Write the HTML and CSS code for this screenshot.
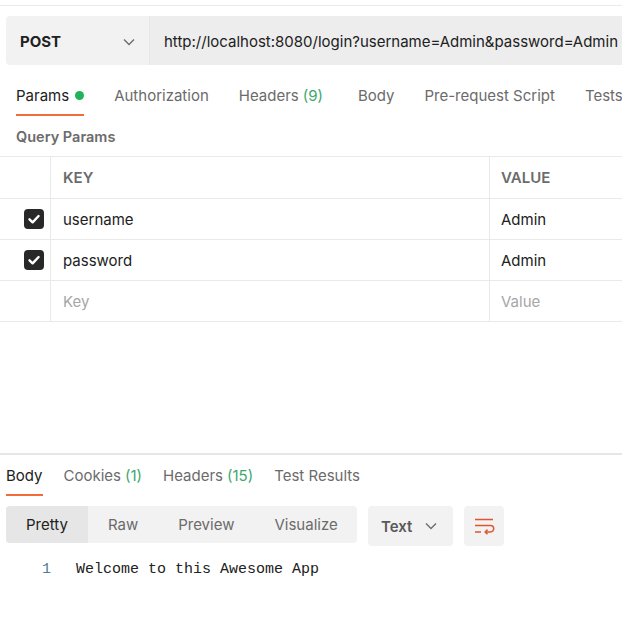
FILE: index.html
```html
<!DOCTYPE html>
<html>
<head>
<meta charset="utf-8">
<link rel="stylesheet" href="styles.css">
</head>
<body>
<div class="page">
  <div class="topline"></div>
  <div class="request">
    <div class="method">
      <span class="method-name">POST</span>
      <svg class="chev" width="12" height="8" viewBox="0 0 12 8"><path d="M1 1.5 L6 6.5 L11 1.5" fill="none" stroke="#6b6b6b" stroke-width="1.3"/></svg>
    </div>
    <div class="url">http://localhost:8080/login?username=Admin&amp;password=Admin</div>
  </div>

  <div class="tabs">
    <div class="tab active">Params <span class="dot"></span></div>
    <div class="tab">Authorization</div>
    <div class="tab">Headers <span class="count">(9)</span></div>
    <div class="tab tab-body">Body</div>
    <div class="tab">Pre-request Script</div>
    <div class="tab">Tests</div>
  </div>

  <div class="section-title">Query Params</div>

  <div class="table">
    <div class="row head">
      <div class="cell check"></div>
      <div class="cell key">KEY</div>
      <div class="cell value">VALUE</div>
    </div>
    <div class="row">
      <div class="cell check"><span class="box"><svg width="20" height="20" viewBox="0 0 20 20"><path d="M5.5 10.3 L8.6 13.3 L14.6 7" fill="none" stroke="#fff" stroke-width="2.4" stroke-linecap="round" stroke-linejoin="round"/></svg></span></div>
      <div class="cell key">username</div>
      <div class="cell value">Admin</div>
    </div>
    <div class="row">
      <div class="cell check"><span class="box"><svg width="20" height="20" viewBox="0 0 20 20"><path d="M5.5 10.3 L8.6 13.3 L14.6 7" fill="none" stroke="#fff" stroke-width="2.4" stroke-linecap="round" stroke-linejoin="round"/></svg></span></div>
      <div class="cell key">password</div>
      <div class="cell value">Admin</div>
    </div>
    <div class="row">
      <div class="cell check"></div>
      <div class="cell key placeholder">Key</div>
      <div class="cell value placeholder">Value</div>
    </div>
  </div>

  <div class="response">
    <div class="rtabs">
      <div class="rtab active">Body</div>
      <div class="rtab">Cookies <span class="count">(1)</span></div>
      <div class="rtab">Headers <span class="count">(15)</span></div>
      <div class="rtab">Test Results</div>
    </div>
    <div class="toolbar">
      <div class="segmented">
        <div class="seg selected">Pretty</div>
        <div class="seg">Raw</div>
        <div class="seg">Preview</div>
        <div class="seg">Visualize</div>
      </div>
      <div class="format">
        <span>Text</span>
        <svg class="chev" width="12" height="8" viewBox="0 0 12 8"><path d="M1 1.5 L6 6.5 L11 1.5" fill="none" stroke="#6b6b6b" stroke-width="1.3"/></svg>
      </div>
      <div class="wrapbtn">
        <svg width="22" height="20" viewBox="0 0 22 20"><path d="M2 3.5 H20 M2 9.5 H17.5 a3.2 3.2 0 0 1 0 6.4 H12.5 M2 15.9 H8" fill="none" stroke="#e0562f" stroke-width="1.5"/><path d="M14.5 13.6 L12.2 15.9 L14.5 18.2" fill="none" stroke="#e0562f" stroke-width="1.5"/></svg>
      </div>
    </div>
    <div class="code">
      <span class="ln">1</span>
      <span class="line">Welcome to this Awesome App</span>
    </div>
  </div>
</div>
</body>
</html>
```

FILE: styles.css
```css
html, body {
  margin: 0;
  padding: 0;
  background: #ffffff;
}
body {
  width: 622px;
  height: 624px;
  overflow: hidden;
  font-family: Inter, "Open Sans", sans-serif;
  font-size: 15px;
  color: #212121;
}
.page {
  width: 622px;
  overflow: hidden;
}
.topline {
  margin-top: 5px;
  height: 1px;
  background: #ebebeb;
}
.request {
  display: flex;
  height: 49px;
  margin: 10px 0 0 6px;
  width: 700px;
}
.method {
  width: 144px;
  box-sizing: border-box;
  background: #f2f2f2;
  border-radius: 4px 0 0 4px;
  display: flex;
  align-items: center;
  justify-content: space-between;
  padding: 2px 14px 0 14px;
  border-right: 1px solid #e6e6e6;
}
.method-name {
  font-weight: 700;
  font-size: 15px;
  color: #212121;
}
.url {
  flex: 1;
  background: #ededed;
  display: flex;
  align-items: center;
  padding: 2px 0 0 14px;
  white-space: nowrap;
  color: #212121;
}
.tabs {
  display: flex;
  gap: 30px;
  padding-left: 16px;
  height: 51px;
  white-space: nowrap;
}
.tab {
  display: flex;
  align-items: center;
  color: #6b6b6b;
  height: 100%;
  box-sizing: border-box;
  padding-top: 12px;
  border-bottom: 2px solid transparent;
}
.tab.active {
  color: #212121;
  border-bottom-color: #f26b3a;
}
.tab-body {
  margin-left: 5px;
}
.dot {
  display: inline-block;
  width: 9px;
  height: 9px;
  border-radius: 50%;
  background: #1fb35a;
  margin-left: 6px;
}
.count {
  color: #3ea870;
  margin-left: 4px;
}
.section-title {
  padding-left: 16px;
  height: 40px;
  display: flex;
  align-items: center;
  font-weight: 600;
  color: #6b6b6b;
  font-size: 14.5px;
}
.table {
  border-top: 1px solid #e9e9e9;
}
.row {
  display: flex;
  height: 40px;
  border-bottom: 1px solid #e9e9e9;
}
.row.head {
  height: 41px;
}
.cell {
  display: flex;
  align-items: center;
  box-sizing: border-box;
}
.check {
  width: 51px;
  border-right: 1px solid #e9e9e9;
  justify-content: flex-end;
  padding-right: 6px;
}
.key {
  width: 439px;
  border-right: 1px solid #e9e9e9;
  padding-left: 12px;
}
.value {
  flex: 1;
  padding-left: 11px;
}
.head .cell {
  font-weight: 600;
  color: #6b6b6b;
}
.placeholder {
  color: #a6a6a6;
}
.box {
  width: 20px;
  height: 20px;
  border-radius: 4px;
  background: #282828;
  display: block;
}
.box svg { display: block; }
.response {
  margin-top: 131px;
  border-top: 2px solid #e6e6e6;
}
.rtabs {
  display: flex;
  gap: 21px;
  padding-left: 6px;
  height: 41px;
  white-space: nowrap;
}
.rtab {
  display: flex;
  align-items: center;
  color: #6b6b6b;
  box-sizing: border-box;
  height: 100%;
  padding-top: 2px;
  border-bottom: 2px solid transparent;
}
.rtab.active {
  color: #212121;
  border-bottom-color: #f26b3a;
}
.toolbar {
  display: flex;
  align-items: flex-start;
  margin-top: 10px;
  padding-left: 6px;
  gap: 11px;
}
.segmented {
  display: flex;
  height: 37px;
  background: #f2f2f2;
  border-radius: 4px;
  width: 351px;
}
.seg {
  display: flex;
  align-items: center;
  color: #6b6b6b;
  padding: 0 20px;
}
.seg.selected {
  background: #e6e6e6;
  color: #212121;
  border-radius: 4px 0 0 4px;
  width: 83px;
  box-sizing: border-box;
}
.format {
  width: 85px;
  height: 40px;
  box-sizing: border-box;
  background: #f2f2f2;
  border-radius: 4px;
  display: flex;
  align-items: center;
  justify-content: space-between;
  padding: 0 16px 0 13px;
  font-weight: 600;
  color: #5a5a5a;
}
.wrapbtn {
  width: 40px;
  height: 40px;
  background: #f2f2f2;
  border-radius: 4px;
  display: flex;
  align-items: center;
  justify-content: center;
}
.code {
  display: flex;
  align-items: center;
  height: 30px;
  margin-top: 8px;
  font-family: "Liberation Mono", "DejaVu Sans Mono", monospace;
  font-size: 15px;
}
.ln {
  width: 51px;
  text-align: right;
  color: #4f7d96;
  padding-right: 25px;
  box-sizing: content-box;
}
.line {
  color: #212121;
}
```
